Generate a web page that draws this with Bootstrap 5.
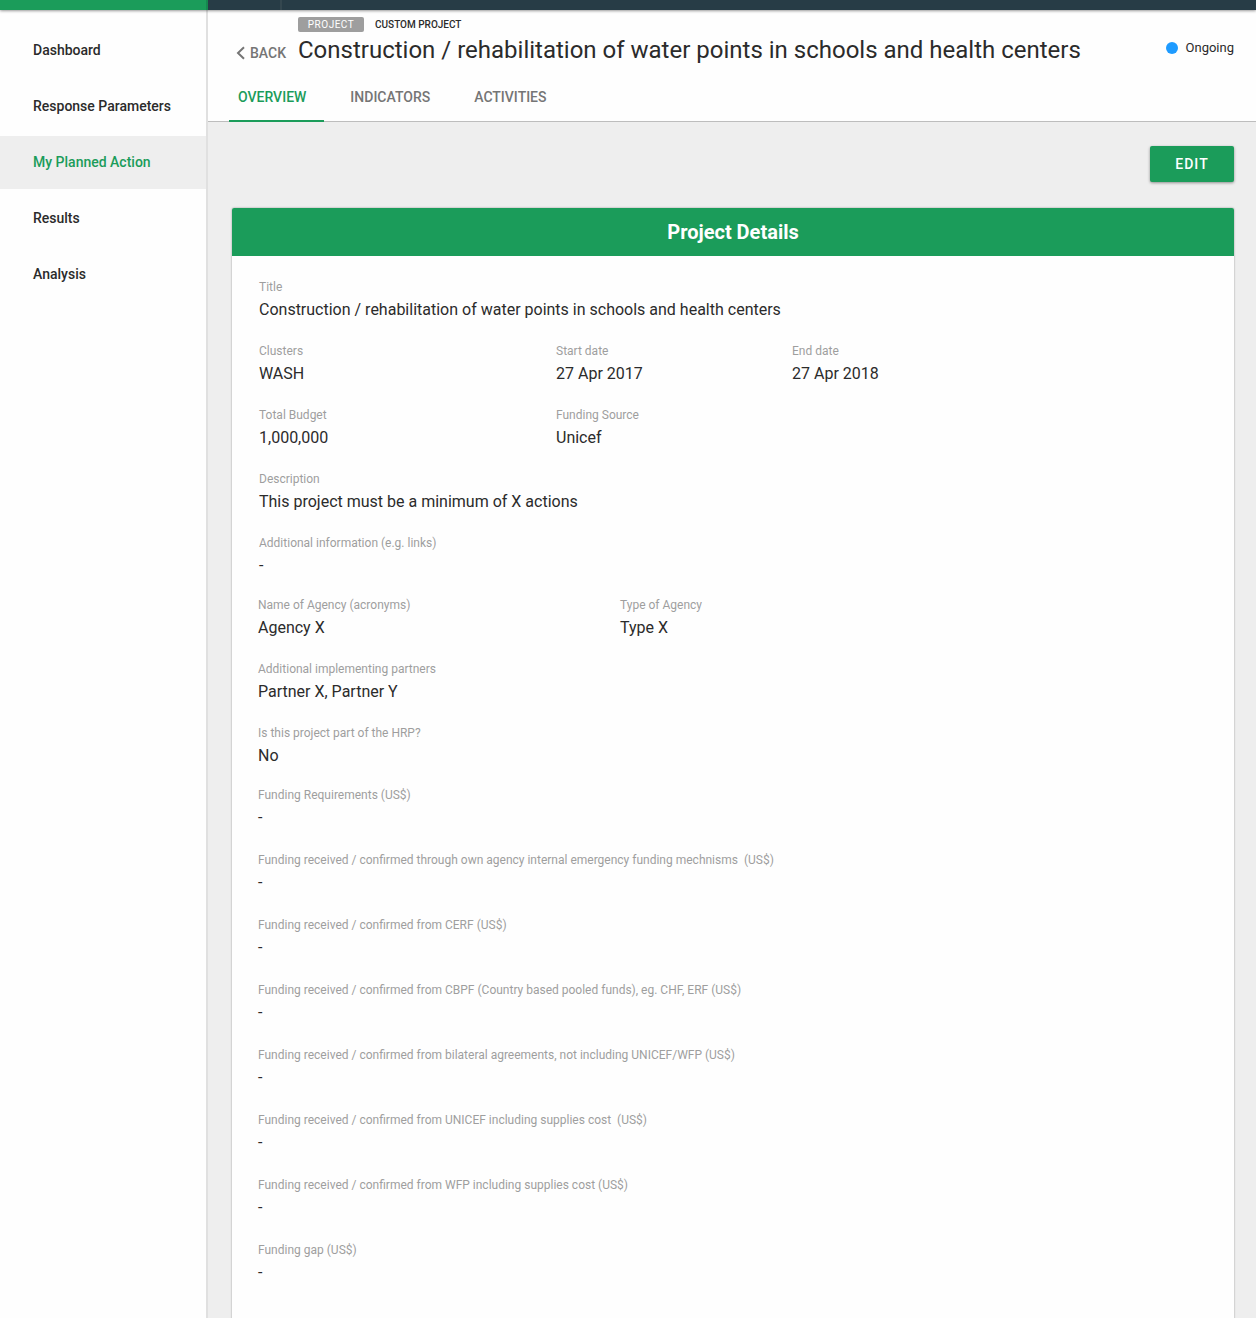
<!DOCTYPE html>
<html lang="en">
<head>
<meta charset="utf-8">
<meta name="viewport" content="width=device-width, initial-scale=1">
<title>Project overview</title>
<link href="https://cdn.jsdelivr.net/npm/bootstrap@5.3.0/dist/css/bootstrap.min.css" rel="stylesheet">
<style>
  :root { --brand: #1b9c5a; --ink: #2b2b2b; --muted: #9e9e9e; }
  body { font-family: Roboto, "Liberation Sans", sans-serif; color: var(--ink); background: #eee; }
  .topbar { height: 10px; background: #273c46; box-shadow: 0 1px 3px rgba(0,0,0,.4); z-index: 2; }
  .topbar-brand { width: 208px; background: var(--brand); border-right: 2px solid #16884f; }
  .topbar-switch { width: 74px; border-right: 2px solid #34474f; }
  .sidebar { width: 208px; background: #fefefe; border-right: 2px solid #e0e0e0; padding-top: 14px; }
  .sidebar .nav { gap: 3px; }
  .sidebar .nav-link { height: 53px; padding: 0 33px; font-size: 14px; font-weight: 500; color: var(--ink); }
  .sidebar .nav-link.active { background: #eee; color: var(--brand); }
  .page-head { background: #fefefe; border-bottom: 1px solid #bdbdbd; padding: 7px 22px 0 21px; }
  .kicker { padding-left: 69px; gap: 11px; font-size: 10px; line-height: 15px; font-weight: 500; }
  .tag-type { width: 66px; background: #9e9e9e; color: #fff; border-radius: 2px; font-weight: 400; letter-spacing: .5px; }
  .head-row { min-height: 36px; padding-left: 7px; }
  .back-link { width: 62px; gap: 5px; padding-top: 11px; font-size: 14px; line-height: 20px; font-weight: 500; color: #757575; }
  .page-title { font-size: 24px; line-height: 36px; font-weight: 400; }
  .status-label { gap: 8px; font-size: 13px; line-height: 20px; padding-top: 6px; }
  .status-dot { width: 12px; height: 12px; background: #1e9bff; }
  .tabs { gap: 17px; margin-bottom: -1px; }
  .tabs .nav-link { height: 54px; padding: 19px 18px 0 9px; font-size: 14px; line-height: 20px; font-weight: 500; color: #757575; border-bottom: 2px solid transparent; }
  .tabs .nav-link.active { color: var(--brand); border-bottom-color: var(--brand); }
  .page-body { padding: 24px 22px 0 24px; }
  .btn-edit { width: 84px; height: 36px; padding: 0; border: 0; border-radius: 2px; background: var(--brand); color: #fff; font-size: 14px; font-weight: 500; letter-spacing: 1px; box-shadow: 0 1px 3px rgba(0,0,0,.4); }
  .btn-edit:hover { background: #168a4e; color: #fff; }
  .details { margin-top: 26px; background: #fefefe; border-radius: 2px; box-shadow: 0 0 2px rgba(0,0,0,.4); overflow: hidden; }
  .details-title { background: var(--brand); color: #fff; font-size: 20px; line-height: 48px; font-weight: 700; }
  .details-body { padding: 21px 26px 60px; gap: 16px; }
  .field-group { gap: 18px; }
  .funding-group { gap: 19px; }
  .general-group { padding-left: 1px; }
  dl, dt, dd { margin: 0; font-weight: 400; }
  dt { font-size: 12px; line-height: 20px; color: var(--muted); }
  dd { font-size: 16px; line-height: 26px; }
  .field-wide { width: 297px; }
  .field-date { width: 236px; }
  .field-agency { width: 362px; }
</style>
</head>
<body>
<div class="d-flex flex-column min-vh-100">
  <div class="topbar d-flex position-relative flex-shrink-0">
    <div class="topbar-brand"></div>
    <div class="topbar-switch"></div>
  </div>
  <div class="d-flex flex-grow-1">
    <aside class="sidebar flex-shrink-0">
      <nav class="nav flex-column" aria-label="Main">
        <a class="nav-link d-flex align-items-center" href="#">Dashboard</a>
        <a class="nav-link d-flex align-items-center" href="#">Response Parameters</a>
        <a class="nav-link d-flex align-items-center active" aria-current="page" href="#">My Planned Action</a>
        <a class="nav-link d-flex align-items-center" href="#">Results</a>
        <a class="nav-link d-flex align-items-center" href="#">Analysis</a>
      </nav>
    </aside>
    <main class="flex-grow-1">
      <header class="page-head">
        <div class="kicker d-flex">
          <span class="tag-type text-center">PROJECT</span>
          <span>CUSTOM PROJECT</span>
        </div>
        <div class="head-row d-flex">
          <a class="back-link d-flex align-items-center text-decoration-none align-self-start flex-shrink-0" href="#">
            <svg width="9" height="14" viewBox="0 0 9 14" aria-hidden="true"><path d="M8 1.2 2 7 8 12.8" fill="none" stroke="currentColor" stroke-width="2"/></svg>
            BACK
          </a>
          <h1 class="page-title mb-0 flex-grow-1">Construction / rehabilitation of water points in schools and health centers</h1>
          <div class="status-label d-flex align-items-center align-self-start"><span class="status-dot rounded-circle"></span>Ongoing</div>
        </div>
        <ul class="tabs nav">
          <li class="nav-item"><a class="nav-link active" aria-current="page" href="#">OVERVIEW</a></li>
          <li class="nav-item"><a class="nav-link" href="#">INDICATORS</a></li>
          <li class="nav-item"><a class="nav-link" href="#">ACTIVITIES</a></li>
        </ul>
      </header>
      <div class="page-body">
        <div class="d-flex justify-content-end"><button type="button" class="btn btn-edit">EDIT</button></div>
        <section class="details">
          <h2 class="details-title text-center mb-0">Project Details</h2>
          <div class="details-body d-flex flex-column">
            <div class="field-group general-group d-flex flex-column">
              <dl><dt>Title</dt><dd>Construction / rehabilitation of water points in schools and health centers</dd></dl>
              <div class="d-flex flex-wrap">
                <dl class="field-wide"><dt>Clusters</dt><dd>WASH</dd></dl>
                <dl class="field-date"><dt>Start date</dt><dd>27 Apr 2017</dd></dl>
                <dl><dt>End date</dt><dd>27 Apr 2018</dd></dl>
              </div>
              <div class="d-flex flex-wrap">
                <dl class="field-wide"><dt>Total Budget</dt><dd>1,000,000</dd></dl>
                <dl><dt>Funding Source</dt><dd>Unicef</dd></dl>
              </div>
              <dl><dt>Description</dt><dd>This project must be a minimum of X actions</dd></dl>
              <dl><dt>Additional information (e.g. links)</dt><dd>-</dd></dl>
            </div>
            <div class="field-group d-flex flex-column">
              <div class="d-flex flex-wrap">
                <dl class="field-agency"><dt>Name of Agency (acronyms)</dt><dd>Agency X</dd></dl>
                <dl><dt>Type of Agency</dt><dd>Type X</dd></dl>
              </div>
              <dl><dt>Additional implementing partners</dt><dd>Partner X, Partner Y</dd></dl>
              <dl><dt>Is this project part of the HRP?</dt><dd>No</dd></dl>
            </div>
            <div class="funding-group d-flex flex-column">
              <dl><dt>Funding Requirements (US$)</dt><dd>-</dd></dl>
              <dl><dt>Funding received / confirmed through own agency internal emergency funding mechnisms&nbsp; (US$)</dt><dd>-</dd></dl>
              <dl><dt>Funding received / confirmed from CERF (US$)</dt><dd>-</dd></dl>
              <dl><dt>Funding received / confirmed from CBPF (Country based pooled funds), eg. CHF, ERF (US$)</dt><dd>-</dd></dl>
              <dl><dt>Funding received / confirmed from bilateral agreements, not including UNICEF/WFP (US$)</dt><dd>-</dd></dl>
              <dl><dt>Funding received / confirmed from UNICEF including supplies cost&nbsp; (US$)</dt><dd>-</dd></dl>
              <dl><dt>Funding received / confirmed from WFP including supplies cost (US$)</dt><dd>-</dd></dl>
              <dl><dt>Funding gap (US$)</dt><dd>-</dd></dl>
            </div>
          </div>
        </section>
      </div>
    </main>
  </div>
</div>
<script src="https://cdn.jsdelivr.net/npm/bootstrap@5.3.0/dist/js/bootstrap.bundle.min.js"></script>
</body>
</html>
